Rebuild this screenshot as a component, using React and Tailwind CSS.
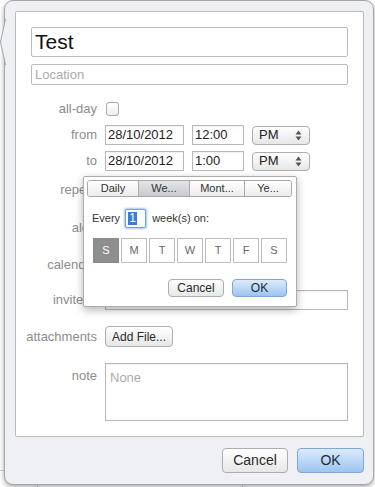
import React from "react";

const grayBtn =
  "flex items-center justify-center rounded-[4px] border border-[#adadad] bg-gradient-to-b from-[#ffffff] to-[#e7e7e7] text-[#2a2a2a]";
const blueBtn =
  "flex items-center justify-center rounded-[4px] border border-[#7ea8d6] bg-gradient-to-b from-[#dcebfc] to-[#9cc5f0] text-[#1d2b3a]";
const field =
  "flex items-center border border-[#b8b8b8] bg-white text-[13px] text-[#222] shadow-[inset_0_1px_1px_rgba(0,0,0,0.06)]";

function Row({ label, className = "", children, labelClass = "" }) {
  return (
    <div className={`flex items-center gap-[8px] pr-[15px] ${className}`}>
      <div
        className={`w-[81px] shrink-0 text-right text-[13px] leading-[20px] text-[#8c8c8c] ${labelClass}`}
      >
        {label}
      </div>
      {children}
    </div>
  );
}

function Stepper() {
  return (
    <svg width="7" height="11" viewBox="0 0 7 11">
      <path d="M3.5 0.5 L6.5 4.5 H0.5 Z M3.5 10.5 L6.5 6.5 H0.5 Z" fill="#555" />
    </svg>
  );
}

function TimeRow({ label, date, time, className }) {
  return (
    <Row label={label} className={`h-[20px] ${className}`}>
      <div className={`${field} h-[20px] w-[79px] pl-[2px]`}>{date}</div>
      <div className={`${field} h-[20px] w-[52px] pl-[2px]`}>{time}</div>
      <div
        className={`${grayBtn} h-[19px] w-[58px] !justify-between pl-[6px] pr-[7px] text-[13px] text-[#222]`}
      >
        <span>PM</span>
        <Stepper />
      </div>
    </Row>
  );
}

function RepeatPopup() {
  const days = ["S", "M", "T", "W", "T", "F", "S"];
  return (
    <div className="absolute left-[67px] top-[164px] z-10 flex h-[131px] w-[214px] flex-col rounded-[2px] border border-[#acacac] bg-white pb-[9px] pl-[3px] pr-[4px] pt-[3px] shadow-[0_3px_8px_rgba(0,0,0,0.3)]">
      <div className="flex h-[17px] overflow-hidden rounded-[3px] border border-[#a9a9a9] text-[11px] text-[#333]">
        <div className="flex w-[50px] items-center justify-center bg-gradient-to-b from-[#ffffff] to-[#ececec]">
          Daily
        </div>
        <div className="flex w-[51px] items-center justify-center border-l border-[#a9a9a9] bg-gradient-to-b from-[#e4e5e8] to-[#c8cacf]">
          We...
        </div>
        <div className="flex w-[55px] items-center justify-center border-l border-[#a9a9a9] bg-gradient-to-b from-[#ffffff] to-[#ececec]">
          Mont...
        </div>
        <div className="flex flex-1 items-center justify-center border-l border-[#a9a9a9] bg-gradient-to-b from-[#ffffff] to-[#ececec]">
          Ye...
        </div>
      </div>
      <div className="mt-[12px] flex h-[19px] items-center pl-[5px] text-[11px] text-[#333]">
        <span>Every</span>
        <div className="ml-[5px] flex h-[19px] w-[21px] items-center rounded-[2px] border border-[#6aa3e6] bg-white pl-[2px] shadow-[0_0_2px_1px_rgba(100,160,230,0.6)]">
          <span className="bg-[#3b7bd9] px-[1px] text-[12px] leading-[13px] text-white">1</span>
        </div>
        <span className="ml-[6px]">week(s) on:</span>
      </div>
      <div className="mt-[10px] flex gap-[2px] pl-[6px]">
        {days.map((d, i) => (
          <div
            key={i}
            className={
              i === 0
                ? "flex h-[25px] w-[26px] items-center justify-center border border-[#8a8a8a] bg-[#8e8e8e] text-[11px] text-white"
                : "flex h-[25px] w-[26px] items-center justify-center border border-[#bdbdbd] bg-white text-[11px] text-[#666]"
            }
          >
            {d}
          </div>
        ))}
      </div>
      <div className="mt-[16px] flex justify-end gap-[8px] pr-[5px]">
        <div className={`${grayBtn} h-[18px] w-[56px] text-[12px]`}>Cancel</div>
        <div className={`${blueBtn} h-[18px] w-[55px] text-[12px]`}>OK</div>
      </div>
    </div>
  );
}

export default function App() {
  return (
    <div className="relative h-[487px] w-[375px] overflow-hidden bg-white pl-[4px] font-['Liberation_Sans',Arial,sans-serif]">
      {/* page content behind the popover */}
      <div className="absolute left-0 top-[40px] h-px w-[6px] bg-[#cfcfcf]" />
      <div className="absolute left-0 top-[470px] h-px w-[6px] bg-[#cfcfcf]" />
      <div className="absolute left-[37px] top-[470px] h-[17px] w-px bg-[#cfcfcf]" />
      <div className="absolute left-[242px] top-[470px] h-[17px] w-px bg-[#cfcfcf]" />

      <div className="relative flex h-[485px] w-[370px] flex-col rounded-[9px] border border-[#a6a6a6] bg-[#eff0f4] pl-[10px] pr-[9px] pt-[10px] shadow-[0_2px_5px_rgba(0,0,0,0.35)]">
        {/* popover arrow */}
        <svg
          className="absolute left-[-5px] top-[18px]"
          width="7"
          height="46"
          viewBox="0 0 7 46"
        >
          <path d="M6 0 L0.5 23 L6 46 Z" fill="#eff0f4" />
          <path d="M5.5 0 L0.5 23 L5.5 46" fill="none" stroke="#a6a6a6" />
        </svg>

        <div className="relative flex h-[426px] w-[349px] flex-col rounded-[2px] border border-[#bababa] bg-white pt-[15px]">
          <div className="flex flex-col px-[15px]">
            <div className="flex h-[30px] items-center rounded-[2px] border border-[#bcbcbc] pl-[3px] text-[21px] text-[#111]">
              Test
            </div>
            <div className="mt-[7px] flex h-[21px] items-center rounded-[2px] border border-[#bcbcbc] pl-[3px] text-[13px] text-[#aaaaaa]">
              Location
            </div>
          </div>

          <Row label="all-day" className="mt-[14px] h-[20px]">
            <div className="ml-[1px] h-[14px] w-[13px] rounded-[3px] border border-[#a9a9a9] bg-gradient-to-b from-[#ffffff] to-[#eeeeee]" />
          </Row>
          <TimeRow label="from" date="28/10/2012" time="12:00" className="mt-[6px]" />
          <TimeRow label="to" date="28/10/2012" time="1:00" className="mt-[6px]" />
          <Row label="repeat" className="mt-[9px] h-[20px]" />
          <Row label="alert" className="mt-[18px] h-[20px]" />
          <Row label="calendar" className="mt-[17px] h-[20px]" />
          <Row label="invitees" className="mt-[15px] h-[20px]">
            <div className={`${field} h-[20px] flex-1`} />
          </Row>
          <Row label="attachments" className="mt-[16px] h-[21px]">
            <div className={`${grayBtn} h-[21px] w-[68px] text-[12px]`}>Add File...</div>
          </Row>
          <Row label="note" className="mt-[16px] !items-start" labelClass="pt-[3px]">
            <div className={`${field} h-[58px] flex-1 !items-start pl-[4px] pt-[4px] text-[#aaaaaa]`}>
              None
            </div>
          </Row>

          <RepeatPopup />
        </div>

        <div className="mt-[11px] flex justify-end gap-[9px]">
          <div className={`${grayBtn} h-[25px] w-[66px] text-[14px]`}>Cancel</div>
          <div className={`${blueBtn} h-[25px] w-[67px] text-[14px]`}>OK</div>
        </div>
      </div>
    </div>
  );
}
